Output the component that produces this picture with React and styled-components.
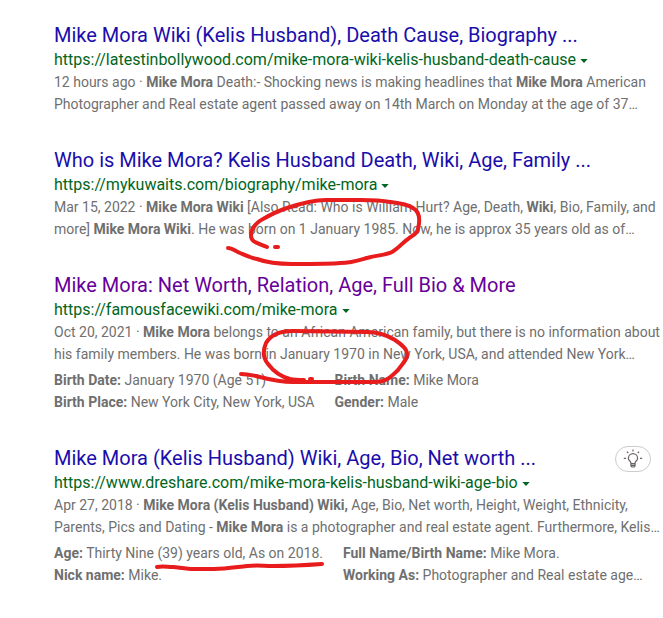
// Libraries
import React from 'react';
import styled, { createGlobalStyle } from 'styled-components';

const results = [
  {
    title: 'Mike Mora Wiki (Kelis Husband), Death Cause, Biography ...',
    url: 'https://latestinbollywood.com/mike-mora-wiki-kelis-husband-death-cause',
    snippet: (
      <>
        12 hours ago · <b>Mike Mora</b> Death:- Shocking news is making headlines that{' '}
        <b>Mike Mora</b> American Photographer and Real estate agent passed away on 14th
        March on Monday at the age of 37…
      </>
    ),
  },
  {
    title: 'Who is Mike Mora? Kelis Husband Death, Wiki, Age, Family ...',
    url: 'https://mykuwaits.com/biography/mike-mora',
    snippet: (
      <>
        Mar 15, 2022 · <b>Mike Mora Wiki</b> [Also Read: Who is William Hurt? Age, Death,{' '}
        <b>Wiki</b>, Bio, Family, and more] <b>Mike Mora Wiki</b>. He was born on 1 January
        1985. Now, he is approx 35 years old as of…
      </>
    ),
  },
  {
    title: 'Mike Mora: Net Worth, Relation, Age, Full Bio & More',
    url: 'https://famousfacewiki.com/mike-mora',
    visited: true,
    snippet: (
      <>
        Oct 20, 2021 · <b>Mike Mora</b> belongs to an African American family, but there is
        no information about his family members. He was born in January 1970 in New York,
        USA, and attended New York…
      </>
    ),
    facts: [
      ['Birth Date:', 'January 1970 (Age 51)'],
      ['Birth Name:', 'Mike Mora'],
      ['Birth Place:', 'New York City, New York, USA'],
      ['Gender:', 'Male'],
    ],
  },
  {
    title: 'Mike Mora (Kelis Husband) Wiki, Age, Bio, Net worth ...',
    url: 'https://www.dreshare.com/mike-mora-kelis-husband-wiki-age-bio',
    hint: true,
    snippet: (
      <>
        Apr 27, 2018 · <b>Mike Mora (Kelis Husband) Wiki,</b> Age, Bio, Net worth, Height,
        Weight, Ethnicity, Parents, Pics and Dating - <b>Mike Mora</b> is a photographer and
        real estate agent. Furthermore, Kelis…
      </>
    ),
    facts: [
      ['Age:', 'Thirty Nine (39) years old, As on 2018.'],
      ['Full Name/Birth Name:', 'Mike Mora.'],
      ['Nick name:', 'Mike.'],
      ['Working As:', 'Photographer and Real estate age…'],
    ],
  },
];

// Red pen strokes drawn over the results
const strokes = [
  'M228 248 C232 248 235 251 240 253 C247 256 251 258 257 259 C268 263 280 264 292 264 C320 264 332 264 340 263 C352 263 360 260 367 258 C378 255 386 255 392 252 C399 248 403 242 408 239 C413 235 417 234 418 229 C420 221 420 212 413 208 C407 204 398 203 390 202 C380 200 368 200 360 200 L326 200 C312 200 299 204 287 208 C278 211 270 215 263 219 C257 222 254 226 252 230 C250 236 251 240 255 242 C259 244 262 245 267 247',
  'M275 247 L278 247',
  'M241 374 C247 374 251 375 256 376 C268 379 278 382 293 382 L374 382 C387 382 392 376 398 370 C402 364 406 361 407 356 C409 350 401 344 395 340 C385 334 377 332 367 332 L293 331 C279 331 270 336 266 343 C263 350 263 358 268 364 C274 372 282 377 290 379 C295 380 299 380 304 380',
  'M310 379 L312 379',
  'M157 567 C163 566 167 567 173 567 C182 568 188 569 194 569 L214 569 C226 569 237 567 247 566 C258 565 263 566 273 566 C291 566 308 565 322 564',
];

const Bulb = () => (
  <svg
    width="20"
    height="20"
    viewBox="0 0 20 20"
    fill="none"
    stroke="#6b6468"
    strokeWidth="1.2"
    aria-hidden="true"
  >
    <path d="M7.9 13.8 C7.9 12 5.4 11.8 5.4 9.2 A4.6 4.6 0 0 1 14.6 9.2 C14.6 11.8 12.1 12 12.1 13.8 V16.2 Q12.1 18 10 18 Q7.9 18 7.9 16.2 Z" />
    <path d="M7.9 14.6 H12.1 M8 16.3 H12" />
    <path d="M10 0.6 V2.6 M3.9 2.6 L5.3 4 M16.1 2.6 L14.7 4 M0.8 9.3 H3 M17 9.3 H19.2" />
  </svg>
);

const Result = ({ data }) => {
  return (
    <ResultWrapper>
      <TitleRow>
        <Title>
          <TitleLink href={data.url} $visited={data.visited}>
            {data.title}
          </TitleLink>
        </Title>
        {data.hint && (
          <HintButton type="button" aria-label="Suggestions">
            <Bulb />
          </HintButton>
        )}
      </TitleRow>
      <UrlRow>
        <cite>{data.url}</cite>
        <MenuButton type="button" aria-label="More options">
          <svg width="8" height="4" viewBox="0 0 8 4" aria-hidden="true">
            <path d="M0.3 0 H7.7 L4 4 Z" fill="#006621" />
          </svg>
        </MenuButton>
      </UrlRow>
      <Snippet>{data.snippet}</Snippet>
      {data.facts && (
        <Facts>
          {data.facts.map(([label, value]) => (
            <Fact key={label}>
              <b>{label}</b> {value}
            </Fact>
          ))}
        </Facts>
      )}
    </ResultWrapper>
  );
};

const App = () => {
  return (
    <Page>
      <GlobalStyle />
      {results.map((result) => (
        <Result key={result.url} data={result} />
      ))}
      <Ink width="440" height="580" aria-hidden="true">
        {strokes.map((d) => (
          <path key={d} d={d} />
        ))}
      </Ink>
    </Page>
  );
};

export default App;

const GlobalStyle = createGlobalStyle`
  body {
    margin: 0;
    background: #fff;
    font-family: Roboto, 'Liberation Sans', sans-serif;
  }
`;

const Page = styled.main`
  position: relative;
  display: flex;
  flex-direction: column;
  gap: 33px;
  padding: 23px 2px 31px 54px;
`;

const ResultWrapper = styled.article`
  display: flex;
  flex-direction: column;
`;

const TitleRow = styled.div`
  display: flex;
  justify-content: space-between;
  align-items: flex-start;
  height: 25px;
  padding-right: 10px;
`;

const Title = styled.h2`
  margin: 0;
  font-size: 20px;
  font-weight: 400;
  line-height: 24px;
`;

const TitleLink = styled.a`
  color: ${(props) => (props.$visited ? '#660099' : '#1a0dab')};
  text-decoration: none;

  &:hover {
    text-decoration: underline;
  }
`;

const HintButton = styled.button`
  display: flex;
  flex-shrink: 0;
  align-items: center;
  justify-content: center;
  width: 36px;
  height: 26px;
  padding: 0;
  border: 1px solid #ccc;
  border-radius: 13px;
  background: #fff;
  cursor: pointer;
`;

const UrlRow = styled.div`
  display: flex;
  align-items: center;
  gap: 4px;
  color: #006621;
  font-size: 16px;
  line-height: 23px;

  cite {
    font-style: normal;
  }
`;

const MenuButton = styled.button`
  display: flex;
  padding: 3px 0 0;
  border: 0;
  background: none;
  cursor: pointer;
`;

const Snippet = styled.p`
  margin: 0;
  color: #6f6f6f;
  font-size: 14px;
  line-height: 22px;
`;

const Facts = styled.ul`
  display: grid;
  grid-template-columns: max-content 1fr;
  column-gap: 20px;
  margin: 4px 0 0;
  padding: 0;
  color: #6f6f6f;
  font-size: 14px;
  line-height: 22px;
  list-style: none;
`;

const Fact = styled.li`
  white-space: nowrap;
`;

const Ink = styled.svg`
  position: absolute;
  top: 0;
  left: 0;
  fill: none;
  stroke: #e81c1c;
  stroke-width: 4px;
  stroke-linecap: round;
  stroke-linejoin: round;
  pointer-events: none;
`;
